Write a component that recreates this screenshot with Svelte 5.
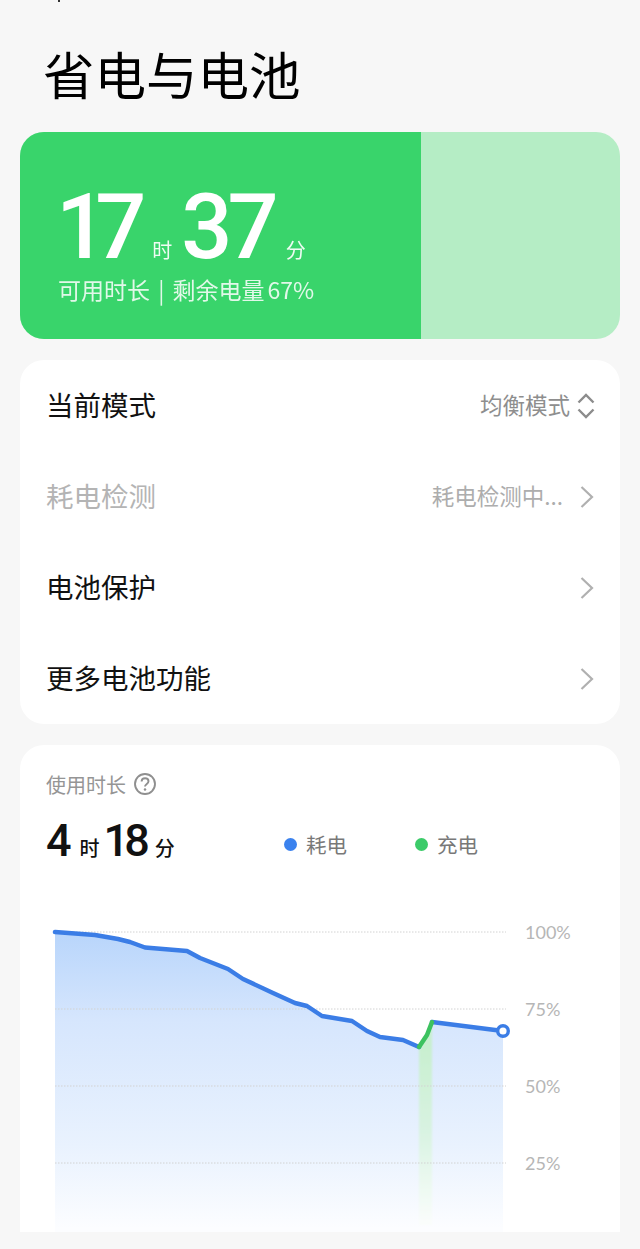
<script lang="ts">
  const rows = [
    { label: '当前模式', value: '均衡模式', icon: 'updown' },
    { label: '耗电检测', value: '耗电检测中...', icon: 'right', muted: true },
    { label: '电池保护', icon: 'right' },
    { label: '更多电池功能', icon: 'right' }
  ];

  const grid = [
    { y: 932, label: '100%' },
    { y: 1009, label: '75%' },
    { y: 1086, label: '50%' },
    { y: 1163, label: '25%' }
  ];

  const drainA =
    '55,932 95,935 118,939 130,942 145,947.5 187,951 200,958 228,969 243,979 273,993 295,1003 307,1006 322,1016 352,1021 367,1031 380,1037 403,1040 419,1047';
  const charge = '419,1047 427,1035 432,1022';
  const drainB = '432,1022 503,1031';
</script>

<main class="page">
  <i class="status-tick"></i>
  <h1>省电与电池</h1>

  <section class="hero">
    <div class="fill">
      <div class="time">
        <b class="h">17</b><span class="u1">时</span><b class="m">37</b><span class="u2">分</span>
      </div>
      <p>可用时长 | 剩余电量<span>67%</span></p>
    </div>
  </section>

  <section class="card list">
    {#each rows as row}
      <div class="row" class:muted={row.muted}>
        <span class="label">{row.label}</span>
        {#if row.value}<span class="value">{row.value}</span>{/if}
        {#if row.icon === 'updown'}
          <svg class="updown" width="20" height="28" viewBox="0 0 20 28" fill="none" stroke="#8c8c8c" stroke-width="2.4">
            <path d="M2.5 10.5 10 3l7.5 7.5M2.5 17.5 10 25l7.5-7.5" />
          </svg>
        {:else}
          <svg class="chev" width="16" height="24" viewBox="0 0 16 24" fill="none" stroke="#b0b0b0" stroke-width="2.2">
            <path d="M2.5 2 13 12 2.5 22" />
          </svg>
        {/if}
      </div>
    {/each}
  </section>

  <section class="card usage">
    <div class="usage-title">
      <span>使用时长</span>
      <svg width="24" height="24" viewBox="0 0 24 24" fill="none">
        <circle cx="12" cy="12" r="10" stroke="#8f8f8f" stroke-width="1.9" />
        <path d="M8.6 9.6c0-2 1.5-3.300 3.500-3.300s3.400 1.300 3.400 3c0 2.700-3.500 2.500-3.500 5.300" stroke="#8f8f8f" stroke-width="1.9" />
        <circle cx="12" cy="17.600" r="1.250" fill="#8f8f8f" />
      </svg>
    </div>
    <div class="usage-head">
      <div class="duration">
        <b>4</b><span class="hour">时</span><b class="second">18</b><span class="minute">分</span>
      </div>
      <div class="legend">
        <span class="key"><i class="dot blue"></i>耗电</span>
        <span class="key"><i class="dot green"></i>充电</span>
      </div>
    </div>

    <svg class="chart" width="600" height="332" viewBox="20 900 600 332">
      <defs>
        <linearGradient id="area" x1="0" y1="932" x2="0" y2="1228" gradientUnits="userSpaceOnUse">
          <stop offset="0" stop-color="#b8d5fb" />
          <stop offset="0.3" stop-color="#d6e6fd" />
          <stop offset="0.72" stop-color="#e9f2fe" />
          <stop offset="1" stop-color="#fcfdff" />
        </linearGradient>
        <linearGradient id="strip" x1="0" y1="1045" x2="0" y2="1222" gradientUnits="userSpaceOnUse">
          <stop offset="0" stop-color="#c8efcf" />
          <stop offset="0.5" stop-color="#d9f3e2" />
          <stop offset="1" stop-color="#fafdfb" />
        </linearGradient>
        <filter id="soft" x="-30%" y="-5%" width="160%" height="110%">
          <feGaussianBlur stdDeviation="1" />
        </filter>
      </defs>
      <polygon points="{drainA} 432,1022 503,1031 503,1232 55,1232" fill="url(#area)" />
      <polygon points="419,1047 427,1035 432,1022 432,1225 419,1225" fill="url(#strip)" filter="url(#soft)" />
      {#each grid as g}
        <line x1="55" x2="506" y1={g.y} y2={g.y} stroke="#d2d2d2" stroke-width="1" stroke-dasharray="1.500 1.500" />
        <text x="525" y={g.y + 6.500}>{g.label}</text>
      {/each}
      <polyline points={drainA} class="line" stroke="#3b7de6" />
      <polyline points={drainB} class="line" stroke="#3b7de6" />
      <polyline points={charge} class="line" stroke="#3cc25f" />
      <circle cx="503" cy="1031" r="5.300" fill="#fff" stroke="#3b7de6" stroke-width="3.400" />
    </svg>
  </section>
</main>

<style>
  :global(body) {
    margin: 0;
    background: #f7f7f7;
  }
  .page {
    position: relative;
    height: 1249px;
    overflow: hidden;
    font-family: 'Noto Sans CJK SC', 'Noto Sans', sans-serif;
    background: #f7f7f7;
  }
  .status-tick {
    position: absolute;
    left: 58px;
    top: 0;
    width: 2px;
    height: 2px;
    background: #333;
  }
  h1 {
    margin: 0;
    padding: 38px 0 0 43px;
    height: 92px;
    box-sizing: border-box;
    font-size: 51.500px;
    line-height: 70px;
    font-weight: 400;
    color: #000;
  }
  .hero {
    margin: 40px 20px 0;
    height: 207px;
    border-radius: 24px;
    overflow: hidden;
    background: #b5edc5;
  }
  .fill {
    width: 401px;
    height: 100%;
    box-sizing: border-box;
    padding: 50px 0 0 36px;
    background: #39d46b;
    color: #fff;
  }
  .time {
    display: flex;
    align-items: baseline;
    height: 92px;
    line-height: 92px;
  }
  .time b {
    font-family: Roboto, sans-serif;
    font-size: 90px;
    font-weight: 500;
  }
  .time .h {
    letter-spacing: -12px;
  }
  .time .m {
    letter-spacing: -5px;
  }
  .time span {
    font-size: 20px;
    line-height: 20px;
    opacity: 0.92;
  }
  .u1 {
    margin: 0 9px 0 18px;
  }
  .u2 {
    margin-left: 12px;
  }
  .fill p {
    margin: 0 0 0 2px;
    font-size: 23px;
    line-height: 30px;
    word-spacing: 3px;
    opacity: 0.85;
    white-space: nowrap;
  }
  .fill p span {
    margin-left: 3px;
  }
  .card {
    margin: 21px 20px 0;
    background: #fff;
    border-radius: 24px;
  }
  .list {
    height: 364px;
    box-sizing: border-box;
    padding-bottom: 0;
  }
  .row {
    display: flex;
    align-items: center;
    height: 91px;
    padding: 0 26px;
  }
  .label {
    flex: 1;
    margin-top: -4px;
    font-size: 27.500px;
    font-weight: 400;
    color: #111;
  }
  .muted .label {
    color: #b4b4b4;
  }
  .value {
    margin-top: -4px;
    font-size: 22.500px;
    color: #8e8e8e;
  }
  .muted .value {
    color: #adadad;
  }
  .updown {
    margin: 0 -2px 0 6px;
  }
  .chev {
    margin: 0 -1px 0 16px;
  }
  .usage {
    height: 487px;
    border-radius: 24px 24px 0 0;
    overflow: hidden;
    margin-top: 21px;
  }
  .usage-title {
    display: flex;
    align-items: center;
    gap: 7px;
    padding: 24px 0 0 26px;
    height: 30px;
    font-size: 20px;
    color: #959595;
  }
  .usage-head {
    display: flex;
    align-items: center;
    height: 52px;
    margin-top: 16px;
    padding-left: 26px;
  }
  .duration {
    display: flex;
    align-items: baseline;
    width: 238px;
    color: #111;
  }
  .duration b {
    font-family: Roboto, sans-serif;
    font-size: 45px;
    font-weight: 500;
    line-height: 52px;
  }
  .duration span {
    font-size: 20px;
    font-weight: 500;
  }
  .hour {
    margin: 0 4px 0 8px;
  }
  .minute {
    margin-left: 10px;
  }
  .duration .second {
    letter-spacing: -5px;
  }
  .legend {
    display: flex;
    gap: 68px;
    margin-top: 6px;
    font-size: 20.500px;
    color: #787878;
  }
  .key {
    display: flex;
    align-items: center;
    gap: 9px;
  }
  .dot {
    width: 13px;
    height: 13px;
    border-radius: 50%;
  }
  .blue {
    background: #3b82ee;
  }
  .green {
    background: #3ccb69;
  }
  .chart {
    display: block;
    margin-top: 33px;
  }
  .chart text {
    font-family: Lato, sans-serif;
    font-size: 18px;
    fill: #b6b6b6;
  }
  .line {
    fill: none;
    stroke-width: 4.500;
    stroke-linejoin: round;
    stroke-linecap: round;
  }
</style>
